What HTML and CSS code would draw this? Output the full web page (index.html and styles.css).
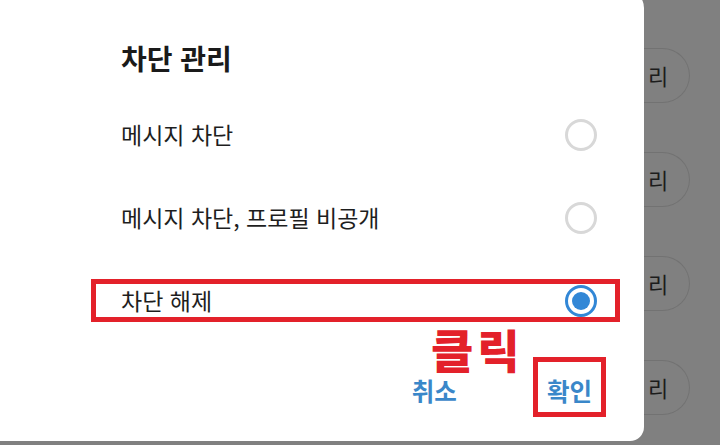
FILE: index.html
```html
<!DOCTYPE html>
<html lang="ko">
<head>
  <meta charset="UTF-8" />
  <title>차단 관리</title>
  <link rel="stylesheet" href="styles.css">
</head>
<body>

  <!-- === Dialog === -->
  <div class="sheet">
    <h1 class="title">차단 관리</h1>

    <div class="options">
      <label class="option">
        <span>메시지 차단</span>
        <span class="radio"></span>
      </label>
      <label class="option">
        <span>메시지 차단, 프로필 비공개</span>
        <span class="radio"></span>
      </label>
      <label class="option marked">
        <span>차단 해제</span>
        <span class="radio checked"></span>
      </label>
    </div>

    <div class="actions">
      <span class="note">클릭</span>
      <button class="btn">취소</button>
      <button class="btn marked">확인</button>
    </div>
  </div>

  <!-- === List behind the dialog === -->
  <div class="bg-list">
    <div class="pill">리</div>
    <div class="pill">리</div>
    <div class="pill">리</div>
    <div class="pill">리</div>
  </div>

</body>
</html>
```

FILE: styles.css
```css
body {
  margin: 0;
  width: 720px;
  height: 445px;
  overflow: hidden;
  display: flex;
  align-items: flex-start;
  background: #808080;
  color: #1e1e1e;
  font-family: "Noto Sans CJK KR", "Noto Sans", sans-serif;
}

/* === Dialog sheet === */
.sheet {
  box-sizing: border-box;
  width: 644px;
  height: 451px;
  margin-top: -10px;
  padding: 51px 24px 0 91px;
  background: #fff;
  border-radius: 0 18px 14px 0;
  flex-shrink: 0;
}

.title {
  margin: 0 0 0 30px;
  font-size: 28px;
  line-height: 34px;
  font-weight: 700;
  color: #1a1a1a;
}

.options {
  display: flex;
  flex-direction: column;
  gap: 40px;
  margin-top: 38px;
}

.option {
  box-sizing: border-box;
  height: 43px;
  display: flex;
  align-items: center;
  justify-content: space-between;
  padding: 0 18px 0 25px;
  border: 5px solid transparent;
  font-size: 23px;
  line-height: 33px;
}

.option.marked {
  border-color: #e3212a;
}

.radio {
  box-sizing: border-box;
  width: 32px;
  height: 32px;
  border: 3px solid #d8d8d8;
  border-radius: 50%;
  display: flex;
  align-items: center;
  justify-content: center;
}

.radio.checked {
  border-color: #3287d6;
}

.radio.checked::after {
  content: "";
  width: 18px;
  height: 18px;
  border-radius: 50%;
  background: #3287d6;
}

/* === Buttons === */
.actions {
  position: relative;
  display: flex;
  justify-content: flex-end;
  gap: 62px;
  margin-top: 35px;
  padding-right: 14px;
}

.btn {
  box-sizing: border-box;
  height: 60px;
  padding: 17px 9px 9px;
  border: 5px solid transparent;
  background: none;
  font-family: inherit;
  font-size: 24.5px;
  font-weight: 700;
  line-height: 24px;
  color: #3a87c9;
}

.btn.marked {
  border-color: #e3212a;
}

.note {
  position: absolute;
  left: 340px;
  top: -28px;
  font-size: 46px;
  font-weight: 900;
  letter-spacing: 4px;
  line-height: 38px;
  color: #e3212a;
}

/* === Background list === */
.bg-list {
  display: flex;
  flex-direction: column;
  gap: 49px;
  padding-top: 48px;
}

.pill {
  box-sizing: border-box;
  width: 46px;
  height: 55px;
  padding-left: 4px;
  border: 1px solid #727272;
  border-left: none;
  border-radius: 0 28px 28px 0;
  font-size: 22px;
  line-height: 53px;
  color: #1c1c1c;
}
```
